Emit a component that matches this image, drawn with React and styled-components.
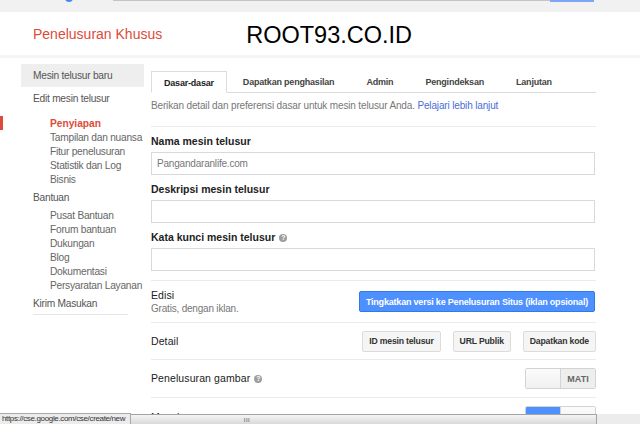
import React from 'react';
import styled, { createGlobalStyle } from 'styled-components';

const Global = createGlobalStyle`
  html, body { margin: 0; padding: 0; overflow: hidden; background: #fff; }
  body { font-family: "Liberation Sans", Arial, sans-serif; color: #222; }
  * { box-sizing: border-box; }
`;

const Page = styled.div`
  width: 640px;
  height: 424px;
  overflow: hidden;
`;

const TopStrip = styled.div`
  height: 12px;
  background: #f1f1f1;
  display: flex;
  align-items: flex-start;
  overflow: hidden;
`;
const Dot = styled.span`
  flex: none;
  width: 8px;
  height: 8px;
  border-radius: 50%;
  background: #4285f4;
  margin: -6px 0 0 65px;
`;
const SearchEdge = styled.span`
  width: 437px;
  height: 1px;
  background: #c4c4c4;
  margin-left: 40px;
`;
const ButtonEdge = styled.span`
  width: 44px;
  height: 2px;
  background: #7ea6f4;
`;

const Header = styled.header`
  height: 43px;
  display: flex;
  align-items: center;
  padding-left: 33px;
`;
const Title = styled.div`
  font-size: 14px;
  color: #dd4b39;
`;
const Brand = styled.div`
  font-size: 23.5px;
  color: #000;
  margin: 4px 0 0 84px;
`;
const Band = styled.div`
  height: 3px;
  background: #f5f5f5;
`;

const Body = styled.div`
  display: flex;
`;

const Sidebar = styled.nav`
  width: 151px;
  flex: none;
  padding-top: 6px;
`;
const NavTop = styled.div`
  margin-left: 21px;
  width: 123px;
  height: ${p => p.$h || 22}px;
  padding-left: 12px;
  display: flex;
  align-items: center;
  font-size: 10.2px;
  letter-spacing: -0.25px;
  color: #555;
  background: ${p => (p.$selected ? '#eeeeee' : 'transparent')};
`;
const SubList = styled.div`
  margin-top: ${p => p.$gap || 0}px;
`;
const SubItem = styled.div`
  height: 14px;
  padding-left: 50px;
  display: flex;
  align-items: center;
  font-size: 10.2px;
  letter-spacing: ${p => (p.$active ? '0' : '-0.25px')};
  font-weight: ${p => (p.$active ? 'bold' : 'normal')};
  color: ${p => (p.$active ? '#dd4b39' : '#666')};
  box-shadow: ${p => (p.$active ? 'inset 3px 0 0 #dd4b39' : 'none')};
`;
const NavDivider = styled.div`
  margin-left: 33px;
  width: 95px;
  height: 1px;
  background: #e5e5e5;
`;

const Main = styled.main`
  width: 445px;
  flex: none;
  padding-top: 13px;
`;
const TabBar = styled.div`
  display: flex;
  height: 22px;
  border-bottom: 1px solid #dcdcdc;
`;
const Tab = styled.div`
  display: flex;
  align-items: center;
  padding: 1px ${p => (p.$active ? 12 : 16)}px 0;
  font-size: 9px;
  font-weight: bold;
  letter-spacing: -0.2px;
  color: #444;
  white-space: nowrap;
  ${p =>
    p.$active &&
    `
    height: 22px;
    border: 1px solid #dcdcdc;
    border-bottom-color: #fff;
    background: #fff;
    color: #222;
  `}
`;
const Desc = styled.p`
  margin: 7px 0 14px;
  line-height: 12px;
  font-size: 10px;
  letter-spacing: -0.15px;
  color: #777;
  white-space: nowrap;
`;
const Link = styled.a`
  color: #4a6fd8;
  text-decoration: none;
`;
const Rule = styled.div`
  height: 1px;
  background: #ebebeb;
`;

const Field = styled.div`
  margin-top: 8px;
`;
const Label = styled.div`
  font-size: 10.5px;
  font-weight: bold;
  line-height: 13px;
  color: #222;
  margin-bottom: 4px;
  display: flex;
  align-items: center;
`;
const Input = styled.input`
  display: block;
  width: 444px;
  height: 23px;
  border: 1px solid #d9d9d9;
  padding: 0 5px;
  font-family: inherit;
  font-size: 10px;
  letter-spacing: -0.2px;
  color: #777;
  outline: none;
  background: #fff;
`;
const FieldsEnd = styled.div`
  height: 9px;
`;

const Help = styled.span`
  display: inline-flex;
  align-items: center;
  justify-content: center;
  width: 8px;
  height: 8px;
  border-radius: 50%;
  background: #9e9e9e;
  color: #fff;
  font-size: 7px;
  font-weight: bold;
  margin-left: 4px;
  letter-spacing: 0;
`;

const Row = styled.div`
  height: ${p => p.$h}px;
  display: flex;
  align-items: center;
  justify-content: space-between;
  border-top: 1px solid #ebebeb;
`;
const RowLabel = styled.div`
  font-size: 10.5px;
  line-height: 13px;
  letter-spacing: 0.1px;
  color: #222;
  display: flex;
  align-items: center;
  margin-top: ${p => p.$shift || 0}px;
`;
const RowSub = styled.div`
  font-size: 10px;
  line-height: 13px;
  letter-spacing: -0.2px;
  color: #777;
`;
const PrimaryButton = styled.button`
  height: 21px;
  padding: 0 6px;
  margin-right: 1px;
  border: 1px solid #3079ed;
  border-radius: 2px;
  background: #4d90fe;
  color: #fff;
  font-family: inherit;
  font-size: 9px;
  font-weight: bold;
  letter-spacing: -0.2px;
  white-space: nowrap;
`;
const ButtonGroup = styled.div`
  display: flex;
  gap: 12px;
`;
const Button = styled.button`
  height: 21px;
  padding: 0 6px;
  border: 1px solid #dcdcdc;
  border-radius: 2px;
  background: #f5f5f5;
  color: #333;
  font-family: inherit;
  font-size: 8.7px;
  font-weight: bold;
  letter-spacing: -0.2px;
  white-space: nowrap;
`;
const Toggle = styled.div`
  display: flex;
  width: 71px;
  height: 21px;
  border: 1px solid #d3d3d3;
  border-radius: 2px;
  overflow: hidden;
  align-self: ${p => (p.$top ? 'flex-start' : 'center')};
  margin-top: ${p => (p.$top ? 8 : 0)}px;
`;
const ToggleHalf = styled.div`
  flex: 1;
  display: flex;
  align-items: center;
  justify-content: center;
  font-size: 9px;
  font-weight: bold;
  color: ${p => (p.$on ? '#fff' : '#666')};
  background: ${p =>
    p.$on ? '#4d90fe' : p.$label ? '#eeeeee' : 'linear-gradient(#fbfbfb, #f1f1f1)'};
  & + & {
    border-left: 1px solid #d3d3d3;
  }
`;

const StatusLayer = styled.div`
  position: fixed;
  left: 0;
  right: 0;
  bottom: 0;
  height: 10px;
  display: flex;
`;
const Scrollbar = styled.div`
  width: 597px;
  display: flex;
  border-top: 1px solid #a3a3a3;
  border-right: 1px solid #a3a3a3;
  background: linear-gradient(#f4f4f4, #d9d9d9);
`;
const Thumb = styled.div`
  width: 494px;
  display: flex;
  align-items: center;
  justify-content: center;
  font-size: 6px;
  letter-spacing: 0.5px;
  color: #555;
  line-height: 1;
`;
const Corner = styled.div`
  flex: 1;
  background: #ececec;
`;
const StatusUrl = styled.div`
  position: fixed;
  left: 0;
  bottom: 0;
  width: 131px;
  height: 11px;
  padding-left: 2px;
  background: #ececec;
  border-top: 1px solid #a8a8a8;
  border-right: 1px solid #a8a8a8;
  font-size: 8px;
  line-height: 10px;
  letter-spacing: -0.35px;
  color: #333;
  white-space: nowrap;
  overflow: hidden;
`;

const subSetup = ['Tampilan dan nuansa', 'Fitur penelusuran', 'Statistik dan Log', 'Bisnis'];
const subHelp = ['Pusat Bantuan', 'Forum bantuan', 'Dukungan', 'Blog', 'Dokumentasi', 'Persyaratan Layanan'];
const tabs = ['Dasar-dasar', 'Dapatkan penghasilan', 'Admin', 'Pengindeksan', 'Lanjutan'];

export default function App() {
  return (
    <Page>
      <Global />
      <TopStrip>
        <Dot />
        <SearchEdge />
        <ButtonEdge />
      </TopStrip>
      <Header>
        <Title>Penelusuran Khusus</Title>
        <Brand>ROOT93.CO.ID</Brand>
      </Header>
      <Band />
      <Body>
        <Sidebar>
          <NavTop $selected $h={23}>Mesin telusur baru</NavTop>
          <NavTop>Edit mesin telusur</NavTop>
          <SubList $gap={7}>
            <SubItem $active>Penyiapan</SubItem>
            {subSetup.map(s => (
              <SubItem key={s}>{s}</SubItem>
            ))}
          </SubList>
          <NavTop>Bantuan</NavTop>
          <SubList>
            {subHelp.map(s => (
              <SubItem key={s}>{s}</SubItem>
            ))}
          </SubList>
          <NavTop>Kirim Masukan</NavTop>
          <NavDivider />
        </Sidebar>
        <Main>
          <TabBar>
            {tabs.map((t, i) => (
              <Tab key={t} $active={i === 0}>{t}</Tab>
            ))}
          </TabBar>
          <Desc>
            Berikan detail dan preferensi dasar untuk mesin telusur Anda.{' '}
            <Link href="#">Pelajari lebih lanjut</Link>
          </Desc>
          <Rule />
          <Field>
            <Label>Nama mesin telusur</Label>
            <Input readOnly value="Pangandaranlife.com" />
          </Field>
          <Field>
            <Label>Deskripsi mesin telusur</Label>
            <Input readOnly value="" />
          </Field>
          <Field>
            <Label>
              Kata kunci mesin telusur<Help>?</Help>
            </Label>
            <Input readOnly value="" />
          </Field>
          <FieldsEnd />
          <Row $h={42}>
            <div>
              <RowLabel>Edisi</RowLabel>
              <RowSub>Gratis, dengan iklan.</RowSub>
            </div>
            <PrimaryButton>Tingkatkan versi ke Penelusuran Situs (iklan opsional)</PrimaryButton>
          </Row>
          <Row $h={37}>
            <RowLabel>Detail</RowLabel>
            <ButtonGroup>
              <Button>ID mesin telusur</Button>
              <Button>URL Publik</Button>
              <Button>Dapatkan kode</Button>
            </ButtonGroup>
          </Row>
          <Row $h={38}>
            <RowLabel>
              Penelusuran gambar<Help>?</Help>
            </RowLabel>
            <Toggle>
              <ToggleHalf />
              <ToggleHalf $label>MATI</ToggleHalf>
            </Toggle>
          </Row>
          <Row $h={38}>
            <RowLabel $shift={2}>
              Masukan ucapan<Help>?</Help>
            </RowLabel>
            <Toggle $top>
              <ToggleHalf $on>AKTIF</ToggleHalf>
              <ToggleHalf />
            </Toggle>
          </Row>
        </Main>
      </Body>
      <StatusLayer>
        <Scrollbar>
          <Thumb>III</Thumb>
        </Scrollbar>
        <Corner />
      </StatusLayer>
      <StatusUrl>https://cse.google.com/cse/create/new</StatusUrl>
    </Page>
  );
}
